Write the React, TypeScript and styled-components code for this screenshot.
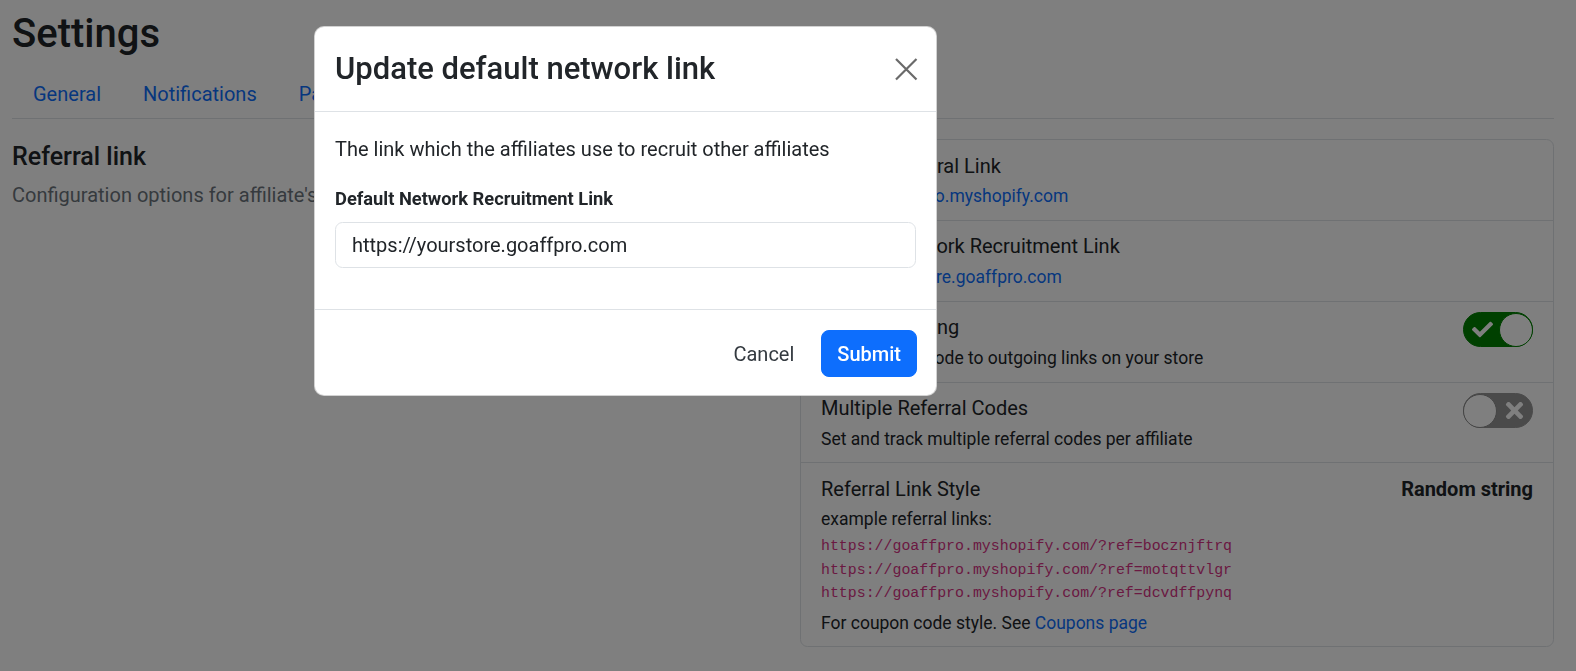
import React from "react";
import styled, { createGlobalStyle } from "styled-components";
import { FaCheck, FaTimes } from "react-icons/fa";

const GlobalStyle = createGlobalStyle`
  *, *::before, *::after { box-sizing: border-box; }
  html, body { margin: 0; padding: 0; }
  body {
    font-family: Roboto, "Liberation Sans", Arial, sans-serif;
    font-size: 20px;
    line-height: 1.5;
    color: #212529;
    background: #ffffff;
  }
`;

const Page = styled.div`
  padding: 0 22px 0 12px;
`;

const PageTitle = styled.h1`
  margin: 10px 0 11px;
  font-size: 40px;
  font-weight: 500;
  line-height: 48px;
`;

const Tabs = styled.nav`
  display: flex;
  border-bottom: 1px solid #dee2e6;
`;

const Tab = styled.a`
  padding: 10px 21px 9px;
  font-size: 20px;
  line-height: 30px;
  color: #0d6efd;
  text-decoration: none;
`;

const Section = styled.section`
  display: grid;
  grid-template-columns: minmax(0, 1fr) 754px;
  column-gap: 12px;
  margin-top: 20px;
`;

const Intro = styled.div`
  padding-top: 3px;
`;

const SectionTitle = styled.h2`
  margin: 0 0 8px;
  font-size: 25px;
  font-weight: 500;
  line-height: 30px;
`;

const SectionDesc = styled.p`
  margin: 0;
  color: #6c757d;
  font-size: 20px;
  line-height: 30px;
`;

const Card = styled.div`
  display: flex;
  flex-direction: column;
  border: 1px solid #dee2e6;
  border-radius: 7.5px;
`;

const Item = styled.div`
  display: flex;
  align-items: flex-start;
  justify-content: space-between;
  gap: 16px;
  padding: 10.5px 20px;
  & + & {
    border-top: 1px solid #dee2e6;
  }
`;

const ItemText = styled.div`
  display: flex;
  flex-direction: column;
  min-width: 0;
`;

const ItemTitle = styled.div`
  font-size: 20px;
  line-height: 30px;
`;

const ItemSub = styled.div<{ $flush?: boolean }>`
  margin-top: ${(p) => (p.$flush ? "0" : "2.6px")};
  font-size: 17.5px;
  line-height: 26.25px;
`;

const ItemLink = styled.a`
  margin-top: 2.6px;
  font-size: 17.5px;
  line-height: 26.25px;
  color: #0d6efd;
  text-decoration: none;
`;

const ItemValue = styled.div`
  font-size: 20px;
  line-height: 30px;
  font-weight: 700;
  white-space: nowrap;
`;

const CodeList = styled.div`
  display: flex;
  flex-direction: column;
  margin: 2.5px 0 4px;
`;

const Code = styled.code`
  font-family: "Liberation Mono", "DejaVu Sans Mono", monospace;
  font-size: 14.9px;
  line-height: 23.5px;
  color: #d63384;
`;

const InlineLink = styled.a`
  color: #0d6efd;
  text-decoration: none;
`;

const Toggle = styled.div<{ $on: boolean }>`
  flex: none;
  display: flex;
  align-items: center;
  flex-direction: ${(p) => (p.$on ? "row" : "row-reverse")};
  width: 70px;
  height: 35px;
  border-radius: 18px;
  border: 1px solid ${(p) => (p.$on ? "#008000" : "#959595")};
  background: ${(p) => (p.$on ? "#008000" : "#959595")};
  color: #ffffff;
`;

const ToggleIcon = styled.span`
  flex: 1;
  display: flex;
  align-items: center;
  justify-content: center;
`;

const Knob = styled.span<{ $on: boolean }>`
  flex: none;
  width: 34px;
  height: 34px;
  margin: -1px;
  border-radius: 50%;
  background: #ffffff;
  border: 1px solid ${(p) => (p.$on ? "#008000" : "#8a8a8a")};
`;

const Backdrop = styled.div`
  position: fixed;
  inset: 0;
  background: rgba(0, 0, 0, 0.5);
`;

const ModalLayer = styled.div`
  position: fixed;
  inset: 0;
  padding: 26px 0 0 314px;
`;

const Dialog = styled.div`
  width: 623px;
  background: #ffffff;
  border: 1px solid rgba(0, 0, 0, 0.175);
  border-radius: 10px;
  overflow: hidden;
`;

const ModalHeader = styled.div`
  display: flex;
  align-items: center;
  justify-content: space-between;
  padding: 19px 18px 19px 20px;
  border-bottom: 1px solid #dee2e6;
`;

const ModalTitle = styled.h3`
  margin: 0;
  font-size: 31px;
  font-weight: 500;
  line-height: 46px;
`;

const CloseButton = styled.button`
  display: flex;
  width: 24px;
  height: 24px;
  padding: 0;
  border: 0;
  background: none;
  color: #6a6a6a;
  cursor: pointer;
`;

const ModalBody = styled.div`
  padding: 22px 20px 41px;
`;

const BodyText = styled.p`
  margin: 0 0 22px;
  font-size: 20px;
  line-height: 30px;
`;

const Label = styled.label`
  display: block;
  margin-bottom: 10px;
  font-size: 18.3px;
  font-weight: 700;
  line-height: 26px;
`;

const Input = styled.input`
  display: block;
  width: 100%;
  height: 46px;
  padding: 7px 16px;
  border: 1px solid #dee2e6;
  border-radius: 7.5px;
  font-family: inherit;
  font-size: 20px;
  line-height: 30px;
  color: #212529;
  outline: none;
`;

const ModalFooter = styled.div`
  display: flex;
  justify-content: flex-end;
  gap: 10px;
  padding: 20px 19px 18px;
  border-top: 1px solid #dee2e6;
`;

const Button = styled.button<{ $primary?: boolean }>`
  height: 47px;
  padding: 0 ${(p) => (p.$primary ? "15px" : "16px")};
  border-radius: 8px;
  border: 1px solid ${(p) => (p.$primary ? "#0d6efd" : "transparent")};
  background: ${(p) => (p.$primary ? "#0d6efd" : "transparent")};
  color: ${(p) => (p.$primary ? "#ffffff" : "#343a40")};
  font-family: inherit;
  font-size: 20px;
  font-weight: ${(p) => (p.$primary ? 500 : 400)};
  line-height: 30px;
  cursor: pointer;
`;

const tabs = ["General", "Notifications", "Payouts", "Advanced", "Integrations"];

const codes = [
  "https://goaffpro.myshopify.com/?ref=bocznjftrq",
  "https://goaffpro.myshopify.com/?ref=motqttvlgr",
  "https://goaffpro.myshopify.com/?ref=dcvdffpynq",
];

function Switch({ on }: { on: boolean }) {
  return (
    <Toggle $on={on}>
      <ToggleIcon>{on ? <FaCheck size={21} /> : <FaTimes size={25} />}</ToggleIcon>
      <Knob $on={on} />
    </Toggle>
  );
}

export default function App() {
  return (
    <>
      <GlobalStyle />
      <Page>
        <PageTitle>Settings</PageTitle>
        <Tabs>
          {tabs.map((t) => (
            <Tab key={t} href="#">
              {t}
            </Tab>
          ))}
        </Tabs>
        <Section>
          <Intro>
            <SectionTitle>Referral link</SectionTitle>
            <SectionDesc>Configuration options for affiliate's referral links</SectionDesc>
          </Intro>
          <Card>
            <Item>
              <ItemText>
                <ItemTitle>Default Referral Link</ItemTitle>
                <ItemLink href="#">https://goaffpro.myshopify.com</ItemLink>
              </ItemText>
            </Item>
            <Item>
              <ItemText>
                <ItemTitle>Default Network Recruitment Link</ItemTitle>
                <ItemLink href="#">https://yourstore.goaffpro.com</ItemLink>
              </ItemText>
            </Item>
            <Item>
              <ItemText>
                <ItemTitle>Link Decorating</ItemTitle>
                <ItemSub>Adds referral code to outgoing links on your store</ItemSub>
              </ItemText>
              <Switch on />
            </Item>
            <Item>
              <ItemText>
                <ItemTitle>Multiple Referral Codes</ItemTitle>
                <ItemSub>Set and track multiple referral codes per affiliate</ItemSub>
              </ItemText>
              <Switch on={false} />
            </Item>
            <Item>
              <ItemText>
                <ItemTitle>Referral Link Style</ItemTitle>
                <ItemSub>example referral links:</ItemSub>
                <CodeList>
                  {codes.map((c) => (
                    <Code key={c}>{c}</Code>
                  ))}
                </CodeList>
                <ItemSub $flush>
                  For coupon code style. See <InlineLink href="#">Coupons page</InlineLink>
                </ItemSub>
              </ItemText>
              <ItemValue>Random string</ItemValue>
            </Item>
          </Card>
        </Section>
      </Page>
      <Backdrop />
      <ModalLayer>
        <Dialog>
          <ModalHeader>
            <ModalTitle>Update default network link</ModalTitle>
            <CloseButton aria-label="Close">
              <svg width="24" height="24" viewBox="0 0 24 24">
                <path d="M2 2L22.5 22.5M22.5 2L2 22.5" stroke="currentColor" strokeWidth="2.2" fill="none" />
              </svg>
            </CloseButton>
          </ModalHeader>
          <ModalBody>
            <BodyText>The link which the affiliates use to recruit other affiliates</BodyText>
            <Label htmlFor="network-link">Default Network Recruitment Link</Label>
            <Input id="network-link" defaultValue="https://yourstore.goaffpro.com" />
          </ModalBody>
          <ModalFooter>
            <Button>Cancel</Button>
            <Button $primary>Submit</Button>
          </ModalFooter>
        </Dialog>
      </ModalLayer>
    </>
  );
}
